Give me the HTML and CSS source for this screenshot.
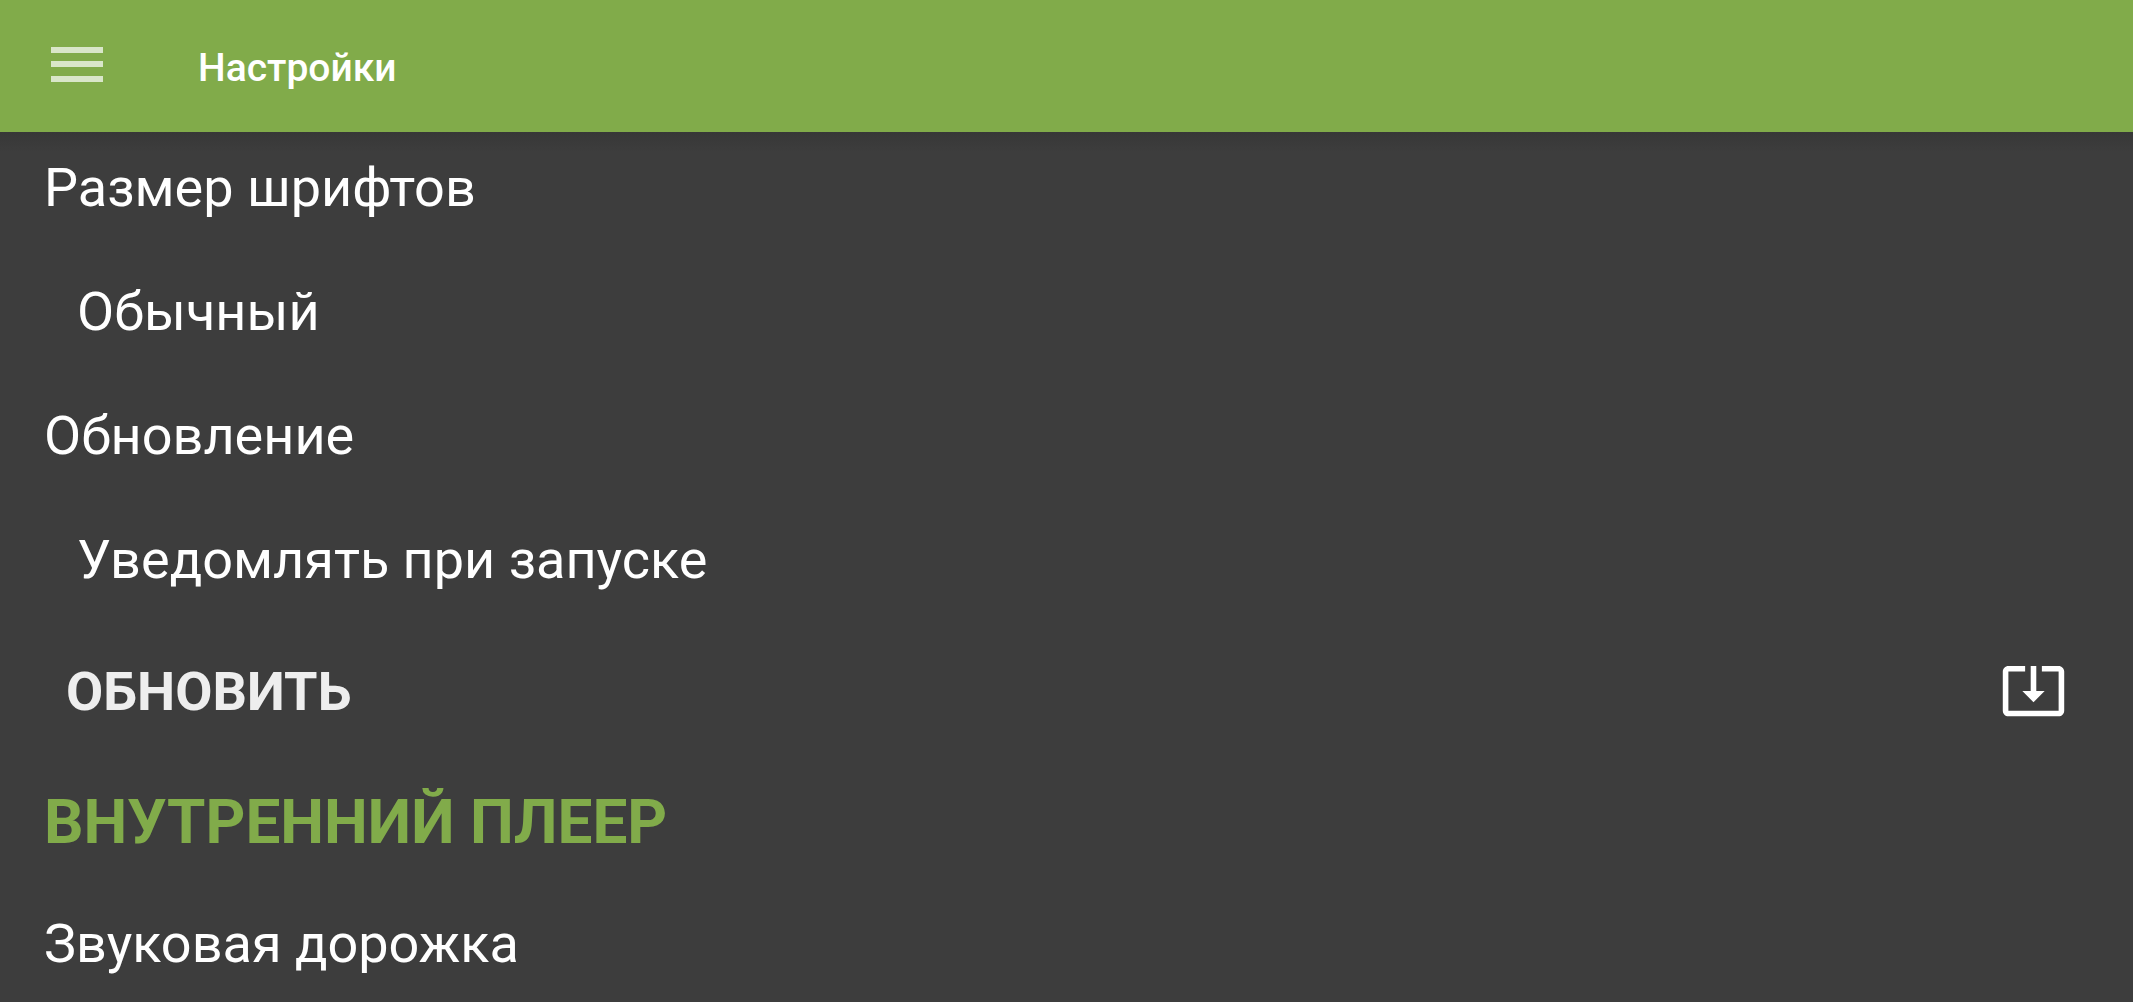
FILE: index.html
```
<!DOCTYPE html>
<html lang="ru">
<head>
  <meta charset="UTF-8">
  <meta name="viewport" content="width=device-width, initial-scale=1.0">
  <title>Настройки</title>
  <link rel="stylesheet" href="styles.css">
</head>
<body>

  <header class="toolbar">
    <button type="button" class="menu-button" aria-label="Меню">
      <svg class="menu-icon" viewBox="0 0 52 35" aria-hidden="true">
        <path d="M0 0h52v6H0zM0 14h52v6H0zM0 29h52v6H0z"/>
      </svg>
    </button>
    <h1 class="toolbar-title">Настройки</h1>
  </header>

  <main class="settings">
    <label class="label" for="font-size">Размер шрифтов</label>
    <select class="value" id="font-size">
      <option>Обычный</option>
    </select>

    <label class="label" for="update-mode">Обновление</label>
    <select class="value" id="update-mode">
      <option>Уведомлять при запуске</option>
    </select>

    <button type="button" class="update-button">
      <span>ОБНОВИТЬ</span>
      <svg class="update-icon" viewBox="0 1 24 24" aria-hidden="true">
        <path d="M12 16.5l4-4h-3v-9h-2v9H8l4 4zm9-13h-6v1.99h6v14.03H3V5.49h6V3.5H3c-1.1 0-2 .9-2 2v14c0 1.1.9 2 2 2h18c1.1 0 2-.9 2-2v-14c0-1.1-.9-2-2-2z"/>
      </svg>
    </button>

    <h2 class="section-title">ВНУТРЕННИЙ ПЛЕЕР</h2>
    <p class="label">Звуковая дорожка</p>
  </main>

</body>
</html>
```

FILE: styles.css
```
* {
  box-sizing: border-box;
}

body {
  margin: 0;
  background-color: #3d3d3d;
  color: #fff;
  font-family: Roboto, sans-serif;
  font-size: 54px;
  line-height: 64px;
}

button,
select {
  margin: 0;
  padding: 0;
  border: none;
  background: none;
  color: inherit;
  font: inherit;
  cursor: pointer;
}

.toolbar {
  display: flex;
  align-items: center;
  gap: 95px;
  height: 132px;
  padding: 4px 51px 0;
  background-color: #81ab4a;
}

.menu-button {
  display: flex;
  padding-bottom: 8px;
}

.menu-icon {
  width: 52px;
  height: 35px;
  fill: #d9e6c9;
}

.toolbar-title {
  margin: 0;
  font-size: 39px;
  font-weight: 500;
}

.settings {
  display: flex;
  flex-direction: column;
  gap: 60px;
  padding: 24px 0 24px 44px;
  /* soft shadow under the toolbar */
  background-image: linear-gradient(#373737, #3d3d3d 20px);
}

.label {
  margin: 0;
}

.value {
  appearance: none;
  height: 64px;
  padding-left: 33px;
}

.update-button {
  display: flex;
  align-items: center;
  justify-content: space-between;
  height: 80px;
  padding: 0 66px 0 22px;
  color: #eee;
  font-weight: 700;
}

.update-icon {
  width: 67px;
  height: 67px;
  fill: #fff;
}

.section-title {
  margin: 0;
  color: #81ab4a;
  font-size: 62px;
  font-weight: 700;
  line-height: 60px;
}
```
